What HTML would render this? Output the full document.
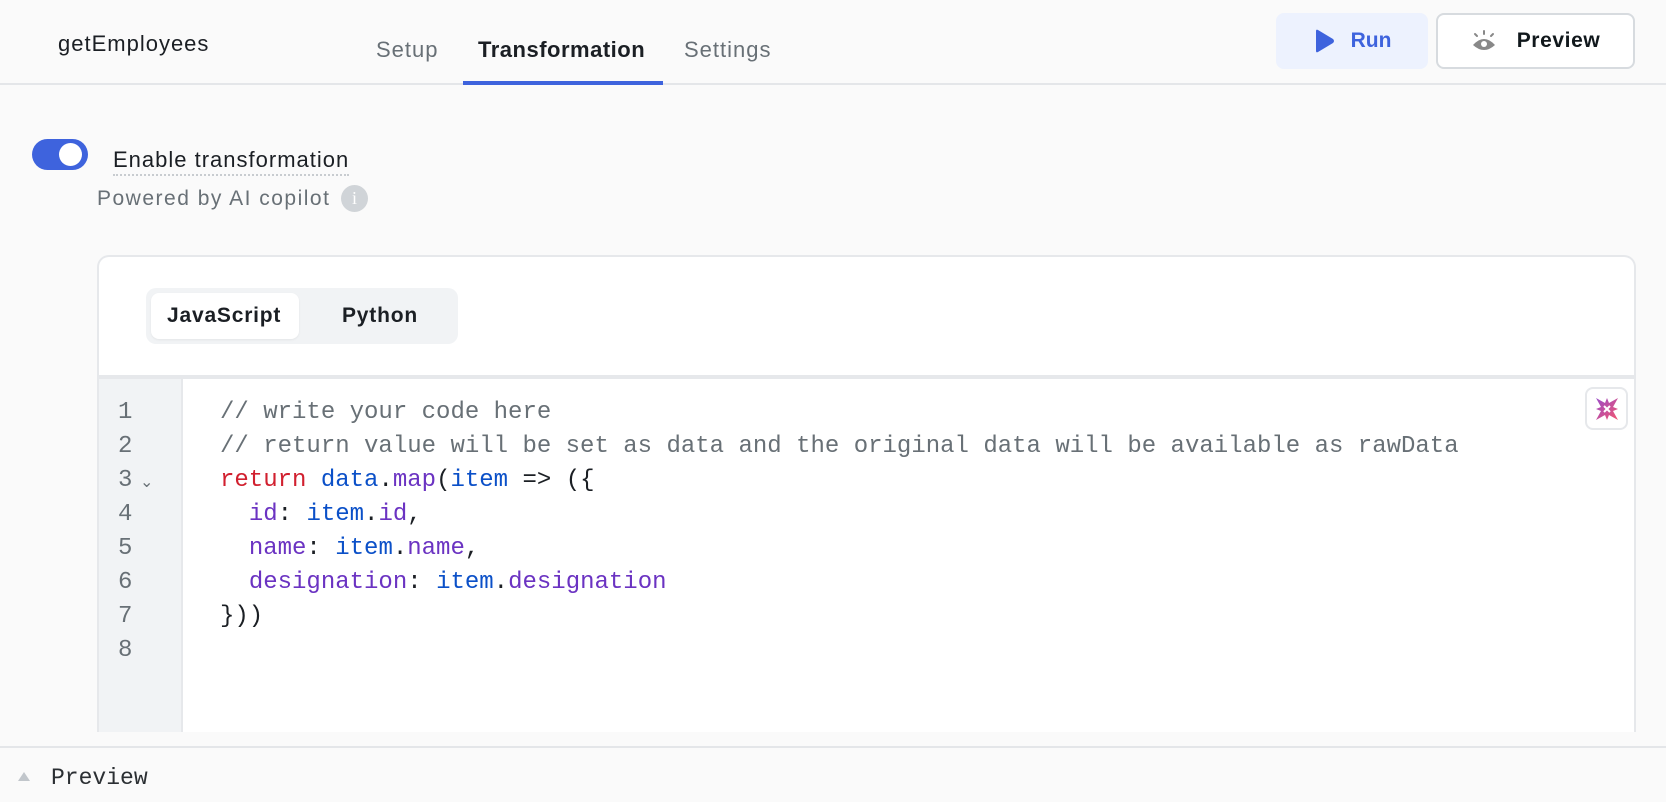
<!DOCTYPE html>
<html><head><meta charset="utf-8"><style>
*{box-sizing:border-box;margin:0;padding:0}
body{width:1666px;height:802px;background:#fafafa;font-family:"Liberation Sans",sans-serif;position:relative;overflow:hidden;color:#1b1f24}
.abs{position:absolute}
.hdr{left:0;top:0;width:1666px;height:85px;border-bottom:2px solid #e4e6e9}
.tab{top:37px;font-size:22px;color:#687076;letter-spacing:1px}
.btn{border-radius:8px;display:flex;align-items:center;justify-content:center;font-size:21px;font-weight:bold}
.code{font-family:"Liberation Mono",monospace;font-size:24px;line-height:34px;white-space:pre}
.cm{color:#687076}.kw{color:#d1202f}.bl{color:#0b50c8}.pu{color:#6b33c2}
</style></head><body>
<div class="abs hdr"></div>
<div class="abs" style="left:58px;top:31px;font-size:22px;letter-spacing:1px;color:#1b1f24">getEmployees</div>
<div class="abs tab" style="left:376px">Setup</div>
<div class="abs tab" style="left:478px;color:#1b1f24;font-weight:bold;letter-spacing:0.5px">Transformation</div>
<div class="abs tab" style="left:684px">Settings</div>
<div class="abs" style="left:463px;top:81px;width:200px;height:4px;background:#3e63dd"></div>
<div class="abs btn" style="left:1276px;top:13px;width:152px;height:56px;background:#edf2fe;color:#3e63dd">
<svg width="22" height="26" viewBox="0 0 22 26" style="margin-right:16px"><path d="M3 3 Q3 1 5 2 L20 11 Q22 13 20 15 L5 24 Q3 25 3 23Z" fill="#3e63dd"/></svg>Run</div>
<div class="abs btn" style="left:1436px;top:13px;width:199px;height:56px;background:#fff;border:2px solid #d7dbdf;color:#11181c;letter-spacing:0.6px">
<svg width="26" height="22" viewBox="0 0 26 22" style="margin-right:20px"><g stroke="#888" stroke-width="2" stroke-linecap="round"><path d="M4 4l2 2M13 1v3M22 4l-2 2"/></g><path d="M2 15Q13 3 24 15Q13 25 2 15Z" fill="#888"/><circle cx="13" cy="14" r="3" fill="#fff"/></svg>Preview</div>

<div class="abs" style="left:32px;top:139px;width:56px;height:31px;border-radius:16px;background:#3e63dd"></div>
<div class="abs" style="left:59px;top:143px;width:23px;height:23px;border-radius:50%;background:#fff"></div>
<div class="abs" style="left:113px;top:147px;font-size:22px;letter-spacing:1px;color:#1b1f24;border-bottom:2px dotted #c8ccd0;padding-bottom:1px">Enable transformation</div>
<div class="abs" style="left:97px;top:187px;font-size:21px;letter-spacing:1.5px;color:#687076">Powered by AI copilot</div>
<div class="abs" style="left:341px;top:185px;width:27px;height:27px;border-radius:50%;background:#d0d4d8;color:#fff;font-size:18px;text-align:center;line-height:27px;font-family:'Liberation Serif',serif">i</div>

<div class="abs" style="left:97px;top:255px;width:1539px;height:477px;background:#fff;border:2px solid #e6e8eb;border-bottom:none;border-radius:12px 12px 0 0"></div>
<div class="abs" style="left:146px;top:288px;width:312px;height:56px;border-radius:10px;background:#f1f3f5"></div>
<div class="abs" style="left:151px;top:293px;width:148px;height:46px;border-radius:8px;background:#fff;box-shadow:0 1px 2px rgba(0,0,0,.06)"></div>
<div class="abs" style="left:167px;top:304px;font-size:21px;font-weight:bold;letter-spacing:0.8px;color:#1b1f24">JavaScript</div>
<div class="abs" style="left:342px;top:304px;font-size:21px;font-weight:bold;letter-spacing:0.8px;color:#1b1f24">Python</div>
<div class="abs" style="left:99px;top:375px;width:1535px;height:4px;background:#e6e8eb"></div>
<div class="abs" style="left:99px;top:379px;width:84px;height:353px;background:#f1f3f5;border-right:2px solid #e6e8eb"></div>
<div class="abs code" style="left:118px;top:396px;color:#687076">1
2
3
4
5
6
7
8</div>
<div class="abs" style="left:140px;top:472px;font-size:16px;color:#687076">⌄</div>
<div class="abs code" style="left:220px;top:396px"><span class="cm">// write your code here</span>
<span class="cm">// return value will be set as data and the original data will be available as rawData</span>
<span class="kw">return</span> <span class="bl">data</span>.<span class="pu">map</span>(<span class="bl">item</span> =&gt; ({
  <span class="pu">id</span>: <span class="bl">item</span>.<span class="pu">id</span>,
  <span class="pu">name</span>: <span class="bl">item</span>.<span class="pu">name</span>,
  <span class="pu">designation</span>: <span class="bl">item</span>.<span class="pu">designation</span>
}))
</div>
<div class="abs" style="left:1585px;top:387px;width:43px;height:43px;border:2px solid #e6e8eb;border-radius:8px;background:#fff;display:flex;align-items:center;justify-content:center">
<svg width="26" height="26" viewBox="0 0 26 26"><defs><linearGradient id="g" x1="0" y1="0" x2="1" y2="1"><stop offset="0" stop-color="#9a4bc9"/><stop offset="1" stop-color="#f2566f"/></linearGradient></defs><path d="M2 2L11 7L13 2L15 7L24 2L19 11L24 13L19 15L24 24L15 19L13 24L11 19L2 24L7 15L2 13L7 11Z" fill="url(#g)"/><path d="M10 10L16 16M16 10L10 16" stroke="#fff" stroke-width="2"/></svg></div>

<div class="abs" style="left:0;top:746px;width:1666px;height:2px;background:#e4e6e9"></div>
<div class="abs" style="left:18px;top:772px;width:0;height:0;border-left:6px solid transparent;border-right:6px solid transparent;border-bottom:9px solid #c1c6cb"></div>
<div class="abs" style="left:51px;top:765px;font-family:'Liberation Mono',monospace;font-size:23px;color:#2b2f33">Preview</div>
</body></html>
